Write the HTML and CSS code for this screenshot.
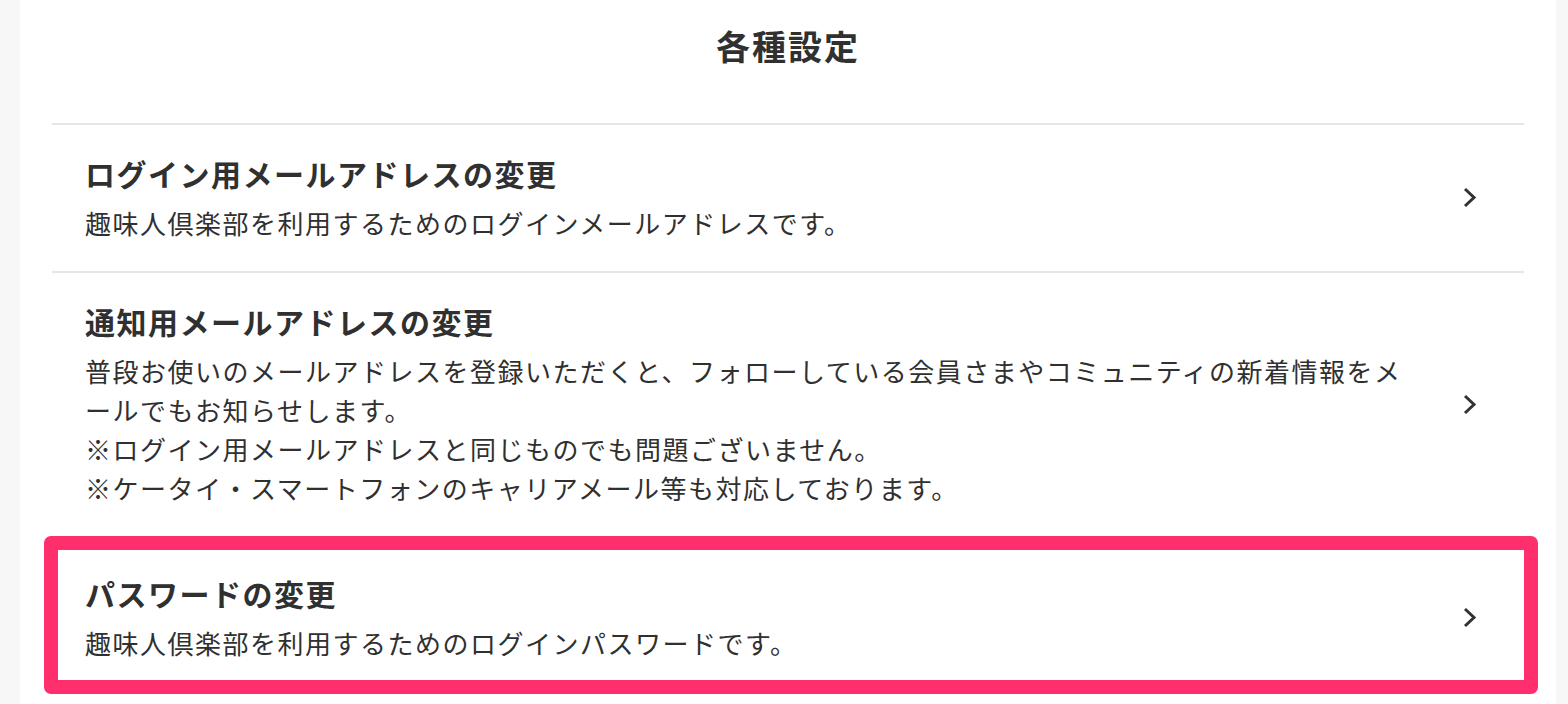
FILE: index.html
```html
<!DOCTYPE html>
<html lang="ja">
<head>
	<meta http-equiv="content-type" content="text/html; charset=utf-8">
	<meta name="viewport" content="width=device-width, initial-scale=1.0">
	<title>各種設定</title>
	<link rel="stylesheet" href="styles.css">
</head>
<body>
	<div class="s-page">
		<div class="s-card">
			<h1 class="s-heading">各種設定</h1>
			<div class="s-list">
				<a class="s-row" href="#">
					<div class="s-row-text">
						<div class="s-row-title">ログイン用メールアドレスの変更</div>
						<div class="s-row-desc">趣味人倶楽部を利用するためのログインメールアドレスです。</div>
					</div>
					<svg class="s-chevron" viewBox="0 0 15 23"><polyline points="3,3 12,11.5 3,20"></polyline></svg>
				</a>
				<a class="s-row" href="#">
					<div class="s-row-text">
						<div class="s-row-title">通知用メールアドレスの変更</div>
						<div class="s-row-desc">普段お使いのメールアドレスを登録いただくと、フォローしている会員さまやコミュニティの新着情報をメールでもお知らせします。<br>※ログイン用メールアドレスと同じものでも問題ございません。<br>※ケータイ・スマートフォンのキャリアメール等も対応しております。</div>
					</div>
					<svg class="s-chevron" viewBox="0 0 15 23"><polyline points="3,3 12,11.5 3,20"></polyline></svg>
				</a>
				<a class="s-row s-row-marked" href="#">
					<div class="s-row-text">
						<div class="s-row-title">パスワードの変更</div>
						<div class="s-row-desc">趣味人倶楽部を利用するためのログインパスワードです。</div>
					</div>
					<svg class="s-chevron" viewBox="0 0 15 23"><polyline points="3,3 12,11.5 3,20"></polyline></svg>
					<div class="s-mark"></div>
				</a>
			</div>
		</div>
	</div>
</body>
</html>
```

FILE: styles.css
```css
body {
	margin: 0;
	background-color: #f7f7f7;
	font-family: "Noto Sans CJK JP", "Noto Sans", sans-serif;
	color: #303030;
}

.s-page {
	padding: 0 12px 0 20px;
}

.s-card {
	background-color: #fff;
	padding: 26px 32px 0 32px;
	min-height: 700px;
}

.s-heading {
	margin: 0 0 57px 0;
	font-size: 34px;
	line-height: 40px;
	font-weight: 700;
	letter-spacing: 2px;
	text-align: center;
}

/*List*/

.s-row {
	position: relative;
	display: flex;
	flex-direction: row;
	align-items: center;
	border-top: 2px solid #e5e5ea;
	padding: 28px 47px 29px 33px;
	color: inherit;
	text-decoration: none;
}

.s-row-text {
	flex: 1 1;
	margin-right: 40px;
}

.s-row-title {
	font-size: 30px;
	line-height: 40px;
	font-weight: 700;
	letter-spacing: 1.5px;
	margin-bottom: 10px;
}

.s-row-desc {
	font-size: 26px;
	line-height: 39px;
	letter-spacing: 1.5px;
	line-break: loose;
}

.s-chevron {
	flex: 0 0 auto;
	width: 15px;
	height: 23px;
}

.s-chevron polyline {
	fill: none;
	stroke: #333;
	stroke-width: 3;
}

/*Highlight*/

.s-row-marked {
	margin-top: 7px;
}

.s-mark {
	position: absolute;
	left: -8px;
	right: -14px;
	top: -9px;
	bottom: -3px;
	border: 14px solid #ff2f6d;
	border-radius: 7px;
}
```
